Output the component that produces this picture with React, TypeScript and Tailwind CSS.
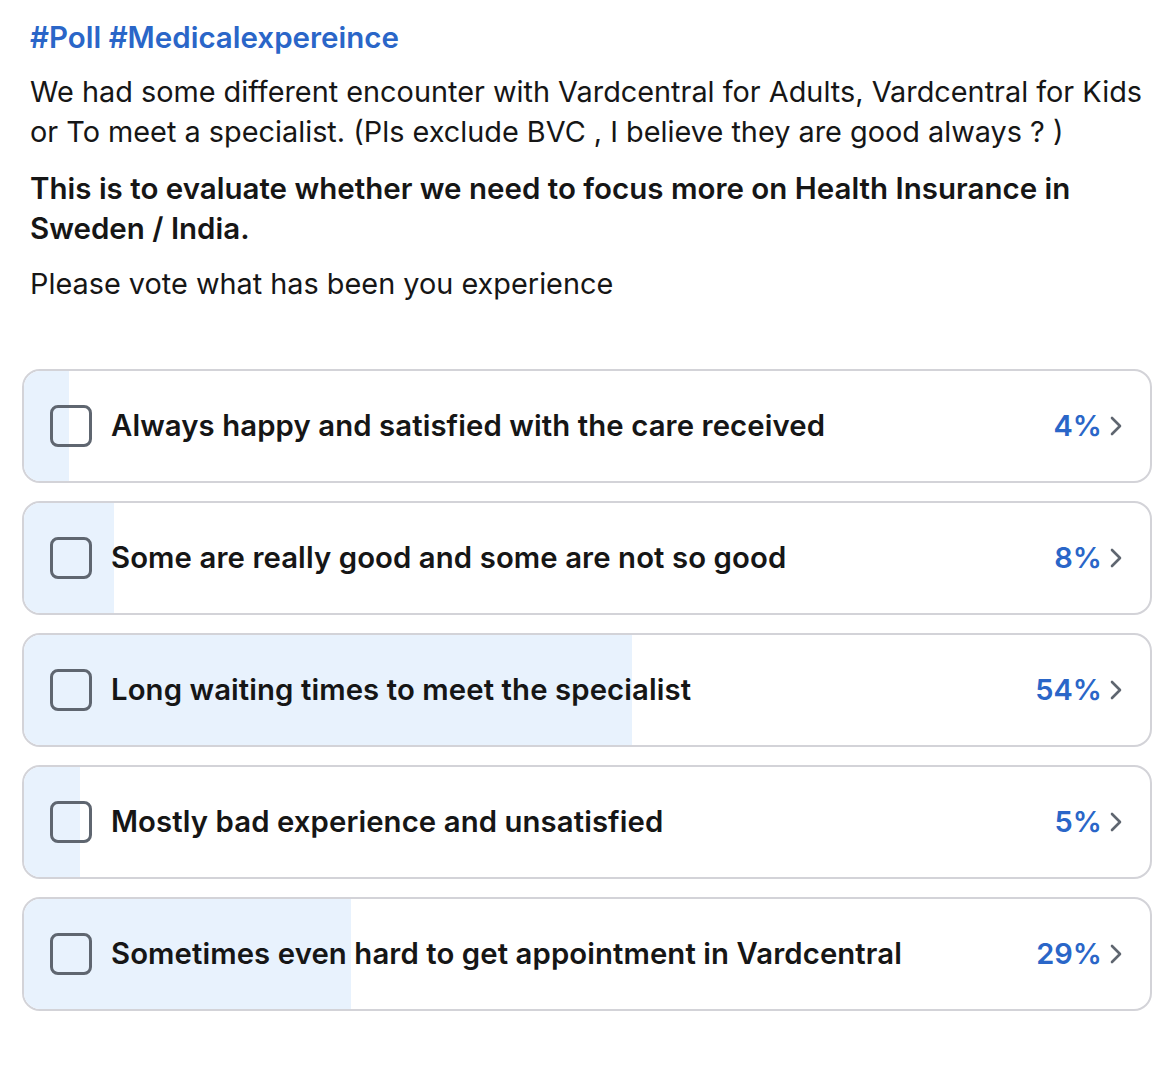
// Poll card — hashtag header, description and vote options with result bars.
import React from 'react';

interface PollOption {
  label: string;
  pct: number;
}

const options: PollOption[] = [
  { label: 'Always happy and satisfied with the care received', pct: 4 },
  { label: 'Some are really good and some are not so good', pct: 8 },
  { label: 'Long waiting times to meet the specialist', pct: 54 },
  { label: 'Mostly bad experience and unsatisfied', pct: 5 },
  { label: 'Sometimes even hard to get appointment in Vardcentral', pct: 29 },
];

const Chevron = () => (
  <svg width="16" height="22" viewBox="0 0 16 22" fill="none" aria-hidden="true">
    <polyline
      points="4,3 12,11 4,19"
      stroke="#5f6670"
      strokeWidth="2.6"
      strokeLinecap="round"
      strokeLinejoin="round"
    />
  </svg>
);

const OptionRow: React.FC<{ option: PollOption }> = ({ option }) => (
  <div className="relative h-[114px] rounded-[18px] border-2 border-[#d3d3d8] bg-white overflow-hidden">
    {/* Result bar */}
    <div className="absolute inset-y-0 left-0 bg-[#e8f2fd]" style={{ width: `${option.pct}%` }} />

    <div className="relative flex h-full items-center pl-[26px] pr-[26px]">
      <div className="h-[42px] w-[42px] shrink-0 rounded-[8px] border-[3px] border-[#5f6670]" />
      <span className="ml-[19px] flex-1 text-[29.3px] font-semibold text-[#161616] tracking-[0.1px]">
        {option.label}
      </span>
      <span className="text-[29px] font-semibold text-[#2a66c8]">{option.pct}%</span>
      <span className="ml-[6px] flex items-center">
        <Chevron />
      </span>
    </div>
  </div>
);

export default function App() {
  return (
    <div
      className="min-h-[1068px] w-[1176px] bg-white pb-10"
      style={{ fontFamily: 'Inter, "Noto Sans", sans-serif' }}
    >
      <div className="pl-[30px] pr-[20px] pt-[17px] text-[28.85px] leading-[40px] text-[#161616]">
        <p className="text-[29.5px] font-semibold text-[#2a66c8]">#Poll #Medicalexpereince</p>
        <p className="mt-[15px]">
          We had some different encounter with Vardcentral for Adults, Vardcentral for Kids or To meet a
          specialist. (Pls exclude BVC , I believe they are good always ? )
        </p>
        <p className="mt-4 text-[29.5px] font-semibold">
          This is to evaluate whether we need to focus more on Health Insurance in Sweden / India.
        </p>
        <p className="mt-4">Please vote what has been you experience</p>
      </div>

      <div className="mt-[65px] flex flex-col gap-[18px] pl-[22px] pr-[24px]">
        {options.map((o) => (
          <OptionRow key={o.label} option={o} />
        ))}
      </div>
    </div>
  );
}
